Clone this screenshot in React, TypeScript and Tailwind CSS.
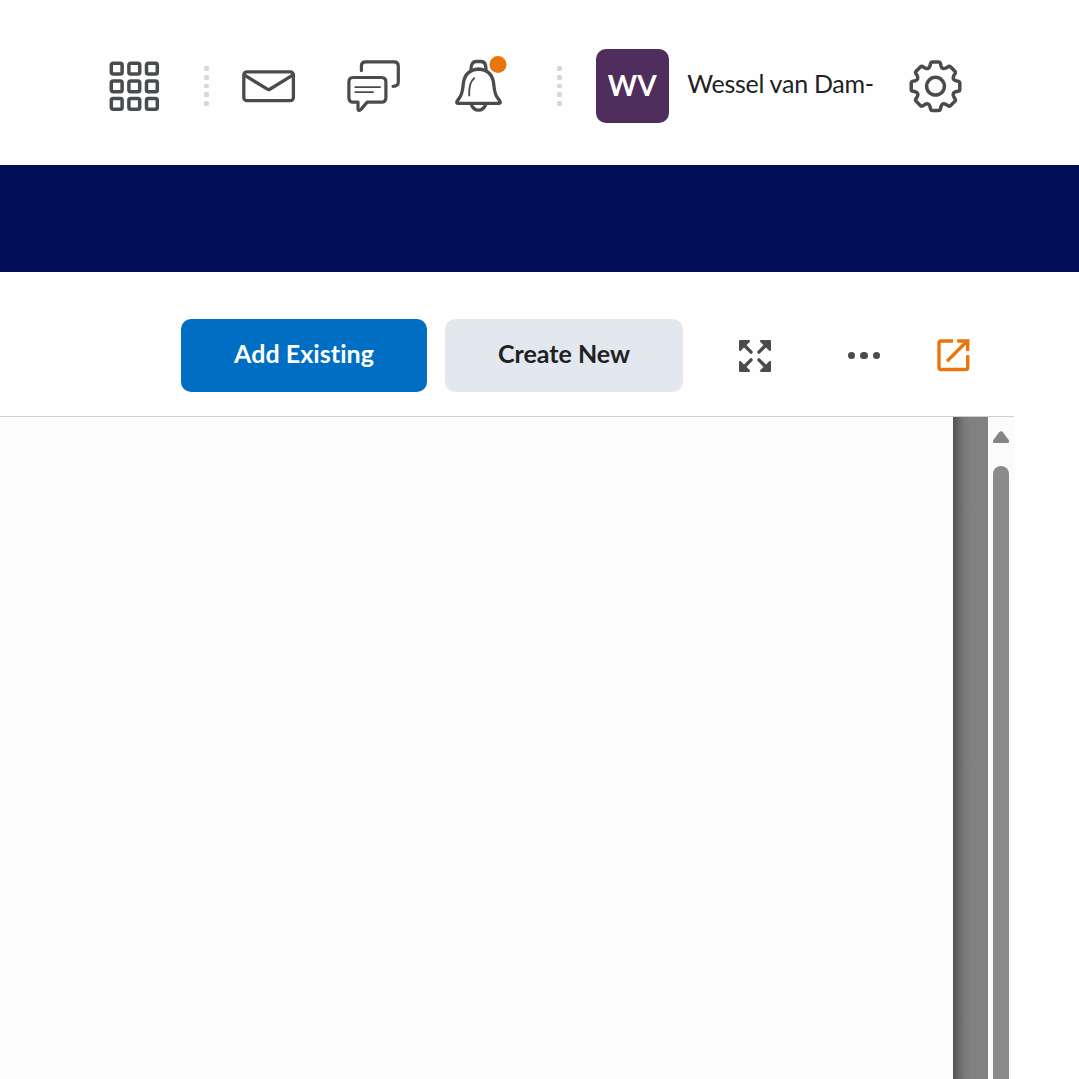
import React from "react";

const INK = "#494c4e";

function gearPath(cx: number, cy: number): string {
  let d = "";
  for (let i = 0; i < 8; i++) {
    const a = (i * Math.PI) / 4;
    const at = (x: number, y: number) => {
      const px = cx + x * Math.cos(a) - y * Math.sin(a);
      const py = cy + x * Math.sin(a) + y * Math.cos(a);
      return `${px.toFixed(2)} ${py.toFixed(2)}`;
    };
    d += `${i === 0 ? "M" : "L"}${at(-5.5, -20.3)}`;
    d += `L${at(-4.8, -23.2)}Q${at(-4.4, -24.3)} ${at(-3.2, -24.3)}`;
    d += `L${at(3.2, -24.3)}Q${at(4.4, -24.3)} ${at(4.8, -23.2)}`;
    d += `L${at(5.5, -20.3)}Q${at(6.6, -16.4)} ${at(10.46, -18.24)}`;
  }
  return `${d}Z`;
}

function AppsIcon() {
  const steps = [2.3, 19.9, 37.5];
  return (
    <svg width="52" height="52" viewBox="0 0 52 52" fill="none" stroke={INK} strokeWidth="3.5">
      {steps.map((y) =>
        steps.map((x) => <rect key={`${x}-${y}`} x={x} y={y} width="10.8" height="10.8" rx="1.8" />),
      )}
    </svg>
  );
}

function DottedDivider() {
  return (
    <div className="flex flex-col gap-1">
      {[0, 1, 2, 3, 4].map((i) => (
        <span key={i} className="size-[4.8px] rounded-[1.6px] bg-[#d3d9db]" />
      ))}
    </div>
  );
}

function MailIcon() {
  return (
    <svg width="54" height="34" viewBox="0 0 54 34" fill="none" stroke={INK} strokeWidth="3.3" strokeLinejoin="round">
      <rect x="1.8" y="1.8" width="49.6" height="28.9" rx="3.2" />
      <path d="M2.5 5.2 25.4 19.2Q26.6 19.9 27.8 19.2L50.7 5.2" />
    </svg>
  );
}

function ChatIcon() {
  return (
    <svg width="54" height="54" viewBox="0 0 54 54" fill="none" stroke={INK} strokeWidth="3.2" strokeLinecap="round" strokeLinejoin="round">
      <path d="M14.4 10.6V6Q14.4 1.8 18.6 1.8H47Q51.3 1.8 51.3 6.1V22Q51.3 26.2 46 26.3" />
      <path d="M6.1 17.5H34.4Q38.9 17.5 38.9 22V37.7Q38.9 42.1 34.4 42.1H20.2L14 49.4Q11 51.8 11 48.8V42.1H6.1Q1.9 42.1 1.9 37.7V22Q1.9 17.5 6.1 17.5Z" />
      <path d="M8.3 27.2H33M8.3 32.2H26" strokeWidth="1.8" />
    </svg>
  );
}

function BellIcon() {
  return (
    <svg width="54" height="58" viewBox="0 0 54 58" fill="none" stroke={INK} strokeWidth="3.3" strokeLinecap="round" strokeLinejoin="round">
      <path d="M23.5 14Q10.2 15 8.4 28C7.5 35.5 7.5 39.5 4.2 43.2L2.2 46Q1 48.2 3 48.3H44Q46 48.2 44.8 46L42.8 43.2C39.5 39.5 39.5 35.5 38.6 28Q36.8 15 23.5 14Z" />
      <path d="M16 14.3C16 8.7 18.3 6.5 21 6.5H26C28.7 6.5 31 8.7 31 14.3" />
      <path d="M16.4 49.6Q18.4 55.1 23.5 55.1Q28.6 55.1 30.6 49.6" />
      <path d="M19.2 23.2Q13.7 27.5 14.2 40.5" strokeWidth="1.9" />
      <circle cx="43" cy="9.5" r="8.5" fill="#e8760d" stroke="none" />
    </svg>
  );
}

function GearIcon() {
  return (
    <svg width="54" height="54" viewBox="0 0 54 54" fill="none" stroke={INK} strokeWidth="3.5" strokeLinejoin="round">
      <path d={gearPath(26.5, 26.2)} />
      <circle cx="26.5" cy="26.2" r="8.9" />
    </svg>
  );
}

function ExpandIcon() {
  return (
    <svg width="32" height="32" viewBox="0 0 32 32">
      {[0, 90, 180, 270].map((angle) => (
        <g key={angle} transform={`rotate(${angle} 16 16)`}>
          <path d="M1.2 0H9.8Q12 .3 10.6 2L2 10.6Q.3 12 0 9.8V1.2Q0 0 1.2 0Z" fill={INK} />
          <path d="M4 4 12.1 12.1" stroke={INK} strokeWidth="3.4" strokeLinecap="round" />
        </g>
      ))}
    </svg>
  );
}

function OpenExternalIcon() {
  return (
    <svg width="33" height="33" viewBox="0 0 33 33" fill="none" stroke="#e8760d" strokeWidth="3.4">
      <path d="M16 2H4Q2 2 2 4V28.5Q2 30.5 4 30.5H28.7Q30.7 30.5 30.7 28.5V16.3" />
      <path d="M10 22.3 29.5 2.8" />
      <path d="M20.2 2H30.7V12" />
      <path d="M24 1H31.8V8.5Z" fill="#e8760d" stroke="none" />
    </svg>
  );
}

export default function App() {
  return (
    <div className="flex h-[1079px] w-[1079px] flex-col overflow-hidden bg-[#fefefe] font-['Lato',sans-serif] text-[#202122]">
      <header className="flex h-[165px] shrink-0 items-start *:shrink-0">
        <button aria-label="Apps" className="mt-[61px] ml-[109px]"><AppsIcon /></button>
        <div className="mt-[66px] ml-[43px]"><DottedDivider /></div>
        <button aria-label="Messages" className="mt-[70px] ml-[33px]"><MailIcon /></button>
        <button aria-label="Chat" className="mt-[60px] ml-[51px]"><ChatIcon /></button>
        <button aria-label="Notifications" className="mt-[55px] ml-[54px]"><BellIcon /></button>
        <div className="mt-[66px] ml-[48px]"><DottedDivider /></div>
        <div className="mt-[49px] ml-[34.2px] flex h-[74px] w-[73px] items-center justify-center rounded-[10px] bg-[#4f2d5c] pb-[3px] text-[28px] font-bold text-white">
          WV
        </div>
        <div className="mt-[65px] ml-[18.5px] w-[187px] text-[25px] leading-[36px] tracking-[-0.27px] whitespace-nowrap">
          Wessel van Dam-
        </div>
        <button aria-label="Settings" className="mt-[60px] ml-[34.3px]"><GearIcon /></button>
      </header>

      <nav className="h-[107px] shrink-0 bg-[#000f56]" />

      <div className="flex h-[145px] w-[1014px] shrink-0 items-start border-b border-[#cfcfcf] *:shrink-0">
        <button className="mt-[47px] ml-[181px] h-[73px] w-[246px] rounded-[10px] bg-[#006fc3] pb-[3px] text-[25px] font-bold tracking-[0.06px] text-white">
          Add Existing
        </button>
        <button className="mt-[47px] ml-[18px] h-[73px] w-[238px] rounded-[10px] bg-[#e3e8ef] pb-[3px] text-[25px] font-bold">
          Create New
        </button>
        <button aria-label="Full screen" className="mt-[68px] ml-[56px]"><ExpandIcon /></button>
        <button aria-label="More" className="mt-[80px] ml-[77px] flex gap-[5px]">
          {[0, 1, 2].map((i) => (
            <span key={i} className="size-[7.3px] rounded-full bg-[#494c4e]" />
          ))}
        </button>
        <button aria-label="Open in new window" className="mt-[67px] ml-[57px]"><OpenExternalIcon /></button>
      </div>

      <main className="flex min-h-0 flex-1">
        <div className="w-[953px] bg-[#fdfdfd]" />
        <div className="w-[35px] bg-linear-to-r from-[#535353] via-[#787878] via-30% to-[#818181] to-50%" />
        <div className="flex w-[26px] flex-col items-center bg-[#fbfbfb]">
          <svg className="mt-3.5 shrink-0" width="18" height="13" viewBox="0 0 18 13">
            <path d="M6.9 1.5Q9-.9 11.1 1.5L16.5 8.8Q18.2 12 15.3 12H2.7Q-.2 12 1.5 8.8Z" fill="#858585" />
          </svg>
          <div className="mt-[22px] w-4 flex-1 rounded-t-full bg-[#8b8b8b]" />
        </div>
      </main>
    </div>
  );
}
